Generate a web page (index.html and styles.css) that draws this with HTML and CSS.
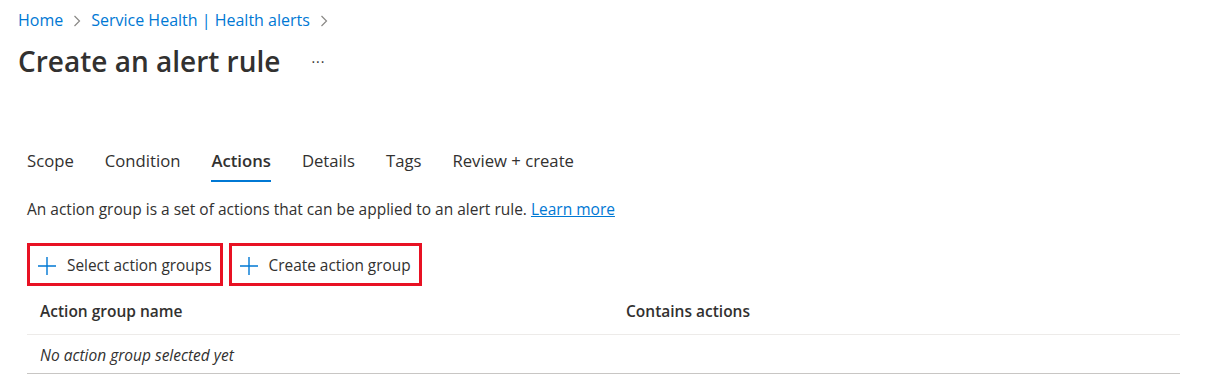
FILE: index.html
```html
<!DOCTYPE html>
<html lang="en">
<head>
    <meta charset="UTF-8">
    <title>Create an alert rule</title>
    <link rel="stylesheet" href="styles.css">
</head>
<body>
    <div class="header">
        <nav class="breadcrumb">
            <a href="#">Home</a>
            <svg class="chev" width="8" height="12" viewBox="0 0 8 12"><path d="M1.5 1l5 5-5 5" stroke="#8a8886" stroke-width="1.2" fill="none"/></svg>
            <a href="#">Service Health | Health alerts</a>
            <svg class="chev" width="8" height="12" viewBox="0 0 8 12"><path d="M1.5 1l5 5-5 5" stroke="#8a8886" stroke-width="1.2" fill="none"/></svg>
        </nav>
        <div class="title-row">
            <h1>Create an alert rule</h1>
            <span class="more">&middot;&middot;&middot;</span>
        </div>
    </div>

    <div class="content">
        <ul class="tabs">
            <li>Scope</li>
            <li>Condition</li>
            <li class="active">Actions</li>
            <li>Details</li>
            <li>Tags</li>
            <li>Review + create</li>
        </ul>

        <p class="desc">An action group is a set of actions that can be applied to an alert rule. <a href="#">Learn more</a></p>

        <div class="toolbar">
            <button class="cmd">
                <svg width="20" height="20" viewBox="0 0 20 20"><path d="M10 1v18M1 10h18" stroke="#0078d4" stroke-width="1.4" fill="none"/></svg>
                Select action groups
            </button>
            <button class="cmd">
                <svg width="20" height="20" viewBox="0 0 20 20"><path d="M10 1v18M1 10h18" stroke="#0078d4" stroke-width="1.4" fill="none"/></svg>
                Create action group
            </button>
        </div>

        <table class="grid">
            <thead>
                <tr><th class="col-name">Action group name</th><th>Contains actions</th></tr>
            </thead>
            <tbody>
                <tr><td class="empty" colspan="2">No action group selected yet</td></tr>
            </tbody>
        </table>
    </div>
</body>
</html>
```

FILE: styles.css
```css
body { margin: 0; font-family: "Segoe UI", "Open Sans", sans-serif; color: #323130; background: #fff; }
a { color: #0078d4; text-decoration: none; }

.header { padding: 7px 18px 0; }
.breadcrumb { font-size: 16px; line-height: 26px; display: flex; gap: 10px; align-items: center; }
.chev { margin-top: 1px; }
.title-row { display: flex; align-items: center; margin-top: 10px; }
h1 { margin: 0; font-size: 28px; font-weight: 600; line-height: 36px; }
.more { margin-left: 31px; font-size: 14px; color: #323130; letter-spacing: 1px; }

.content { padding: 65px 35px 0 27px; }
.tabs { list-style: none; margin: 0; padding: 0; display: flex; gap: 31px; font-size: 16.7px; }
.tabs li { padding: 6px 0 8px; border-bottom: 2px solid transparent; line-height: 22px; }
.tabs li.active { font-weight: 600; border-bottom-color: #0078d4; }

.desc { font-size: 15.5px; margin: 17px 0 0; line-height: 20px; }
.desc a { text-decoration: underline; }

.toolbar { display: flex; gap: 6px; margin-top: 24px; }
.cmd { display: flex; align-items: center; gap: 10px; height: 43px; padding: 2px 8px 0 7px; font: inherit; font-size: 15.4px; color: #323130; background: #fff; border: 3px solid #e81123; }

.grid { width: 100%; border-collapse: collapse; margin-top: 2px; font-size: 15.5px; }
.grid th { text-align: left; font-weight: 600; padding: 12px 13px 12px; border-bottom: 1px solid #edebe9; }
.grid th.col-name { width: 560px; }
.grid td { padding: 9px 13px 7px; border-bottom: 1px solid #c8c6c4; }
.grid td.empty { font-style: italic; }
```
